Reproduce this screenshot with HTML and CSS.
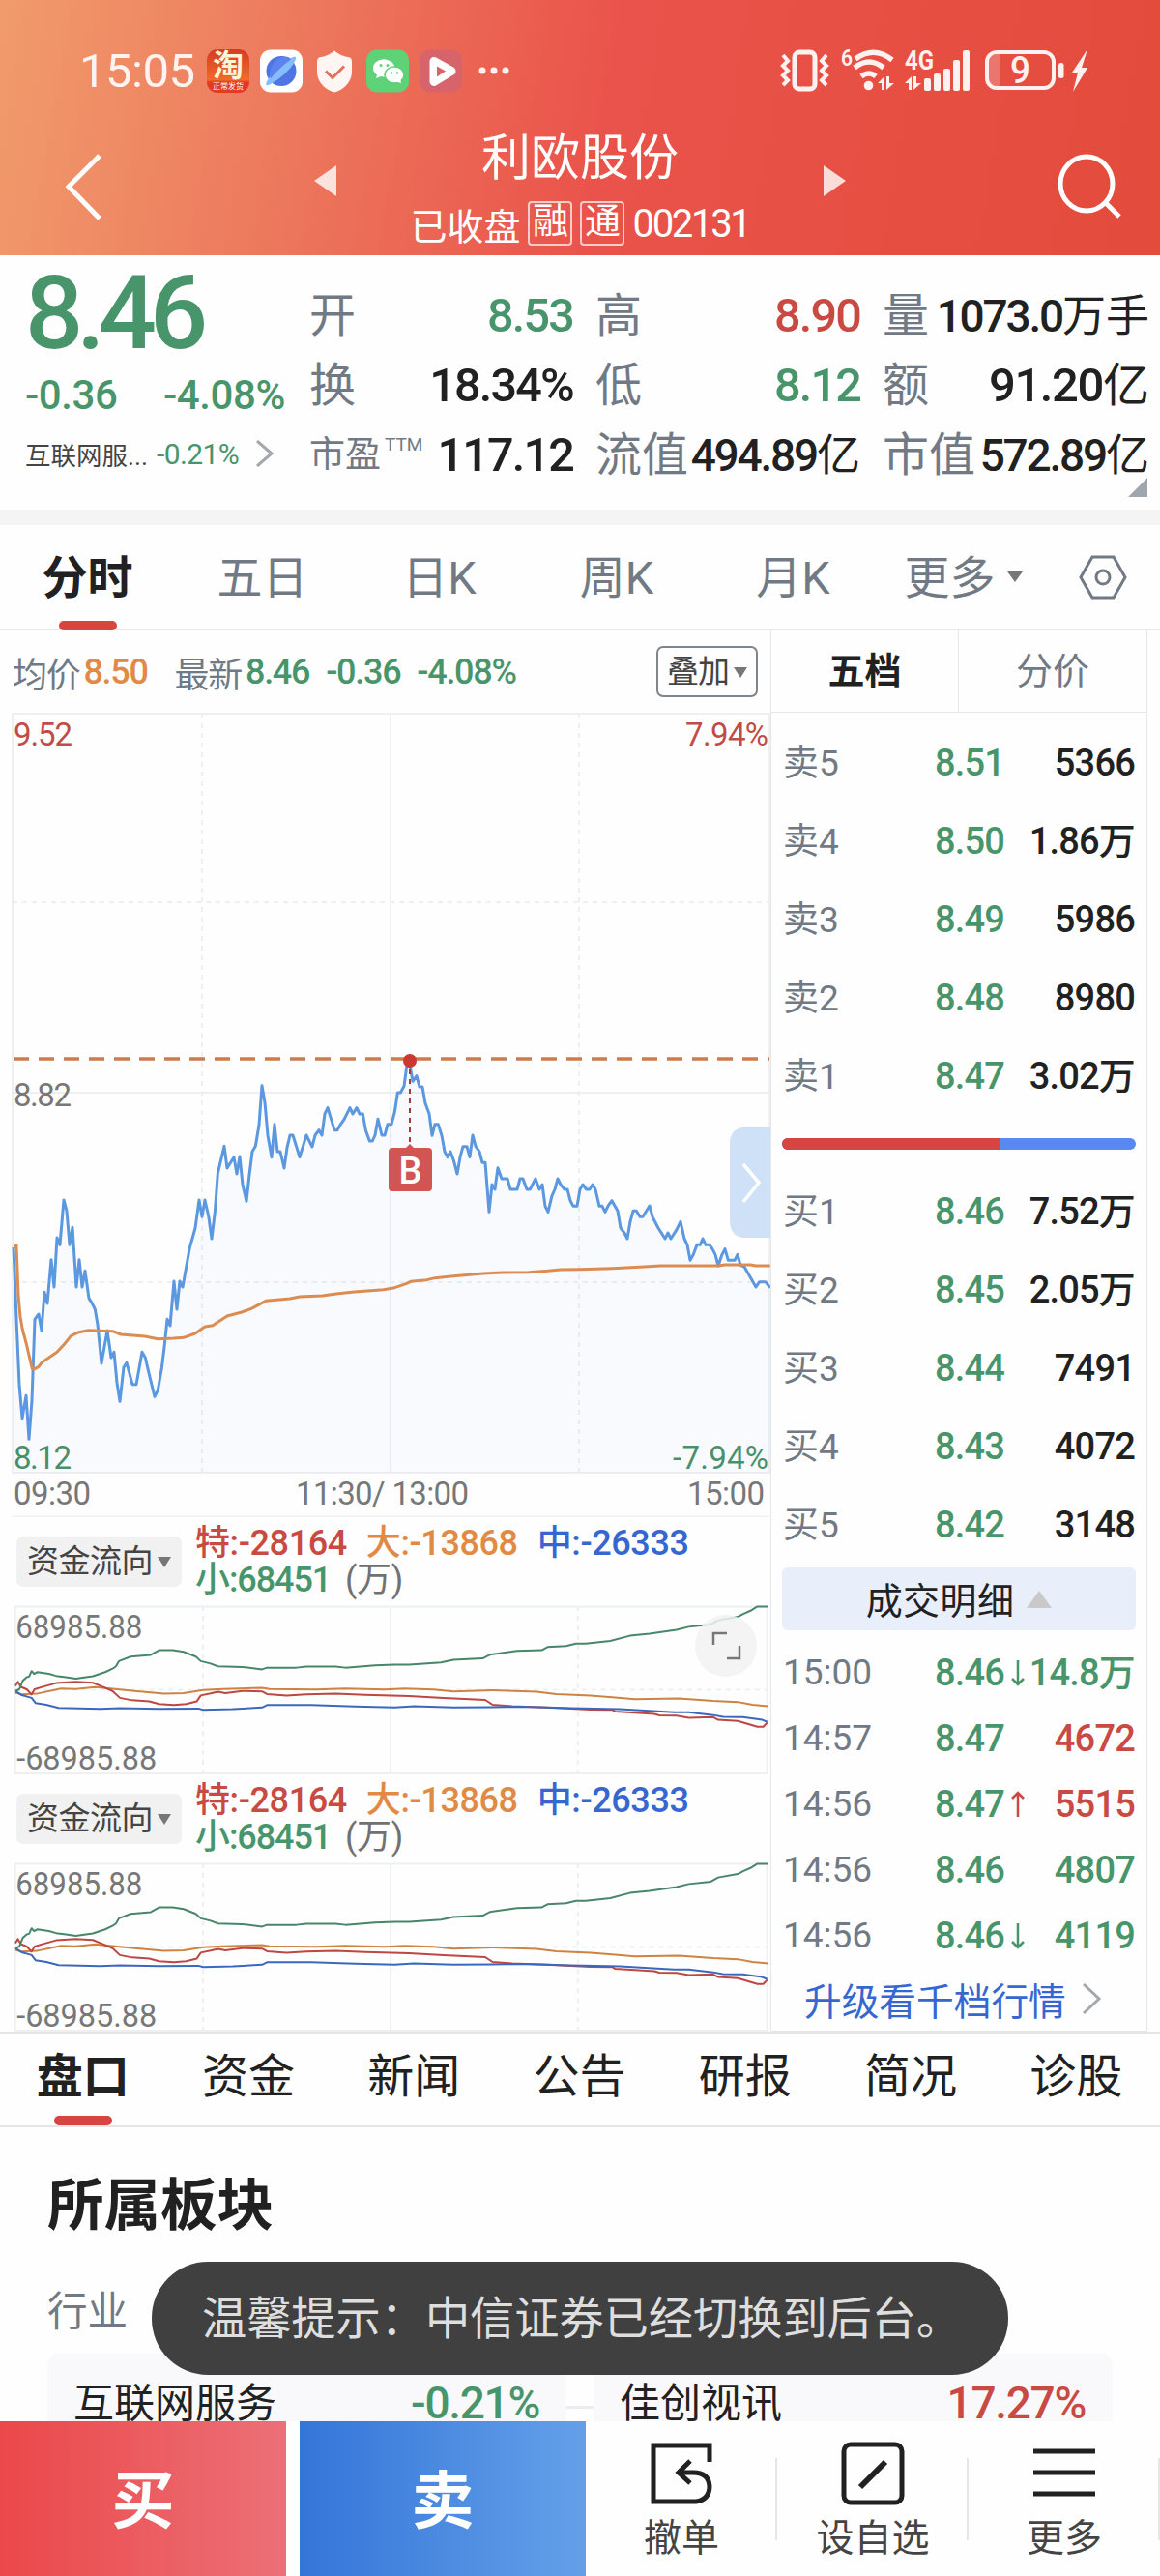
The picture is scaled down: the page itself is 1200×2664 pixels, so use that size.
FILE: index.html
```html
<!DOCTYPE html>
<html lang="zh-CN">
<head>
  <meta charset="UTF-8" />
  <meta name="viewport" content="width=device-width, initial-scale=1.0"/>
  <title>利欧股份 002131</title>
  <link rel="stylesheet" href="styles.css">
</head>
<body>
  <!-- Header -->
  <header class="header">
    <div class="status-bar">
      <span class="clock">15:05</span>
      <div class="app-icons">
        <div class="app taobao"><b>淘</b><i>正常发货</i></div>
        <svg class="app" viewBox="0 0 44 44">
          <rect width="44" height="44" rx="11" fill="#fff"/>
          <circle cx="22" cy="22" r="15.5" fill="#4f74e3"/>
          <path d="M10 36C2 40 8 28 19 18S41 3 36 12C32 20 20 31 10 36Z" fill="#86bdfb"/>
          <path d="M11 30C8 20 15 8 25 7C29 7 31 8 32 10C26 14 17 22 11 30Z" fill="#5d83ee"/>
        </svg>
        <svg class="app" viewBox="0 0 44 44">
          <path d="M22 1C28 6 33 7 38 8Q40 9 40 12V23C40 34 30 42 22 44C14 42 4 34 4 23V12Q4 9 6 8C11 7 16 6 22 1Z" fill="#fff6f4"/>
          <path d="M13 22L20 29L32 17" fill="none" stroke="#e2705c" stroke-width="3"/>
        </svg>
        <svg class="app" viewBox="0 0 44 44">
          <rect width="44" height="44" rx="11" fill="#5fd278"/>
          <path d="M18 10C11 10 7 14.500 7 19C7 22 9 24.500 11 26L10 29.500L15 27.500L20 28V10Z" fill="#fff"/>
          <ellipse cx="18.500" cy="19" rx="11" ry="9" fill="#fff"/>
          <ellipse cx="29" cy="26" rx="10" ry="8.500" fill="#fff" stroke="#5fd278" stroke-width="1.500"/>
          <path d="M31 33L36 34.500L35 30Z" fill="#fff"/>
          <circle cx="15" cy="16" r="1.500" fill="#5fd278"/><circle cx="22" cy="16" r="1.500" fill="#5fd278"/>
          <circle cx="26" cy="24" r="1.200" fill="#5fd278"/><circle cx="32" cy="24" r="1.200" fill="#5fd278"/>
        </svg>
        <svg class="app" viewBox="0 0 44 44">
          <rect width="44" height="44" rx="11" fill="#d7646b"/>
          <path d="M15 12L33 22L15 33Z" fill="#fbd9d7" stroke="#fff" stroke-width="9" stroke-linejoin="round"/>
          <path d="M18 17L27 22L18 28Z" fill="#d7646b"/>
        </svg>
        <svg class="dots" viewBox="0 0 34 44"><circle cx="4" cy="22" r="3.500"/><circle cx="16" cy="22" r="3.500"/><circle cx="28" cy="22" r="3.500"/></svg>
      </div>
      <svg class="system-icons" viewBox="805 48 325 52">
        <g fill="none" stroke="#fff1ef" stroke-width="4">
          <rect x="822" y="55" width="21" height="38" rx="5" stroke-width="5"/>
          <path d="M810 58L815 64L810 69L815 74L810 79L815 84L810 89M855 58L850 64L855 69L850 74L855 79L850 84L855 89"/>
          <path d="M885 62Q904 48 923 63M884 71Q899 59 914 71M891 80Q899 74 906 80" stroke-width="5.500"/>
          <rect x="1021" y="55" width="69" height="37" rx="10"/>
        </g>
        <g fill="#fff1ef">
          <circle cx="898.500" cy="89.500" r="4.800"/>
          <path d="M908 87L915 80V94H912V87ZM917 80H920V87H925L917 94Z"/>
          <path d="M936 87L943 80V94H940V87ZM945 80H948V87H953L945 94Z"/>
          <rect x="956" y="82" width="7" height="13" rx="2"/>
          <rect x="966" y="77" width="7" height="18" rx="2"/>
          <rect x="976" y="72" width="7" height="23" rx="2"/>
          <rect x="986" y="63" width="7" height="32" rx="2"/>
          <rect x="996" y="53" width="7" height="42" rx="2"/>
          <path d="M1023 64Q1024 57 1031 57H1034V90H1031Q1024 90 1023 83Z" opacity=".25"/>
          <rect x="1095" y="66" width="5.500" height="16" rx="2.500"/>
          <path d="M1125 52L1109 76H1115L1110 96L1125 71H1119Z"/>
          <text x="870" y="69" font-size="24" font-weight="600" textLength="12" lengthAdjust="spacingAndGlyphs">6</text>
          <text x="936" y="73" font-size="27" font-weight="700" textLength="30" lengthAdjust="spacingAndGlyphs">4G</text>
          <text x="1045" y="87" font-size="38" font-weight="500" textLength="21" lengthAdjust="spacingAndGlyphs">9</text>
        </g>
      </svg>
    </div>
    <div class="nav-bar">
      <svg class="back" viewBox="0 0 42 72"><path d="M38 4L6 36L38 69" fill="none" stroke="#fff" stroke-width="5"/></svg>
      <svg class="arrow" viewBox="0 0 23 32"><path d="M23 0V32L0 16Z"/></svg>
      <div class="title-box">
        <h1>利欧股份</h1>
        <div class="subtitle">
          <span>已收盘</span>
          <span class="badge">融</span>
          <span class="badge">通</span>
          <span class="code">002131</span>
        </div>
      </div>
      <svg class="arrow" viewBox="0 0 23 32"><path d="M0 0V32L23 16Z"/></svg>
      <svg class="search" viewBox="0 0 70 70"><ellipse cx="32" cy="33" rx="27" ry="28"/><path d="M52 53L66 67"/></svg>
    </div>
  </header>

  <!-- Quote -->
  <section class="quote">
    <div class="quote-main">
      <div class="price down">8.46</div>
      <div class="change down"><span>-0.36</span><span>-4.08%</span></div>
      <div class="industry">
        <span>互联网服...</span><span class="down pct">-0.21%</span>
        <svg class="chevron" viewBox="0 0 20 28"><path d="M2 1L17 14L2 27"/></svg>
      </div>
    </div>
    <dl class="quote-grid">
      <div><dt>开</dt><dd class="down">8.53</dd></div>
      <div><dt>高</dt><dd class="up">8.90</dd></div>
      <div><dt>量</dt><dd class="unit">1073.0<b>万手</b></dd></div>
      <div><dt>换</dt><dd>18.34%</dd></div>
      <div><dt>低</dt><dd class="down">8.12</dd></div>
      <div><dt>额</dt><dd class="unit large">91.20<b>亿</b></dd></div>
      <div><dt class="small">市盈<sup>TTM</sup></dt><dd>117.12</dd></div>
      <div><dt>流值</dt><dd class="unit">494.89<b>亿</b></dd></div>
      <div><dt>市值</dt><dd class="unit">572.89<b>亿</b></dd></div>
    </dl>
    <span class="corner"></span>
  </section>

  <!-- Period tabs -->
  <nav class="period-tabs">
    <a class="active">分时</a>
    <a>五日</a>
    <a>日K</a>
    <a>周K</a>
    <a>月K</a>
    <a>更多<i class="caret"></i></a>
    <svg class="gear" viewBox="0 0 52 48"><path d="M15 3H37L49 24L37 45H15L3 24Z"/><circle cx="26" cy="24" r="7"/></svg>
  </nav>

  <main class="board">
    <div class="charts">
      <div class="stat-row">
        <span>均价</span><b class="orange">8.50</b>
        <span class="latest">最新</span><b class="down">8.46</b><b class="down diff">-0.36</b><b class="down rate">-4.08%</b>
        <button class="overlay-btn">叠加<i class="caret"></i></button>
      </div>

      <!-- Intraday chart -->
      <svg class="chart-main" viewBox="0 737 797 832">
        <g class="grid">
          <path d="M13 738H796V1523H13ZM404 738V1523M13 1130H796M13 1568.500H796"/>
          <path class="dash" d="M209 738V1523M599 738V1523M13 933H796M13 1326H796"/>
        </g>
        <g transform="translate(0 1060) scale(.33333)" fill="none" stroke-linejoin="round">
          <polygon class="area" points="42,1388 42,690 51,910 60,1115 69,1220 81,1150 90,1285 99,1165 108,913 120,897 129,948 138,829 147,864 159,728 168,813 177,660 186,682 198,543 207,577 216,682 225,628 237,813 246,728 255,813 264,763 276,848 295,882 315,1050 333,948 354,1015 372,1168 393,1048 411,1115 423,1115 441,1015 480,1153 502,1065 519,913 528,933 540,795 549,882 558,795 567,813 588,695 618,543 627,595 636,543 657,663 676,460 696,376 705,444 726,410 735,462 744,408 765,547 783,393 804,310 813,188 843,410 852,308 882,444 900,342 930,410 951,342 969,378 1017,257 1038,326 1086,257 1126,276 1147,360 1173,292 1185,342 1215,308 1234,210 1254,190 1271,120 1311,192 1341,343 1360,308 1389,410 1419,462 1437,377 1467,342 1506,427 1518,580 1527,495 1545,443 1605,510 1623,477 1662,477 1701,580 1731,477 1791,562 1809,495 1839,495 1878,580 1899,545 1947,663 1975,577 2016,561 2064,663 2112,610 2142,730 2181,663 2229,747 2250,695 2289,712 2346,813 2390,815 2390,1388"/>
          <polyline class="line-price" points="42,690 51,910 60,1115 69,1220 81,1150 90,1285 99,1165 108,913 120,897 129,948 138,829 147,864 159,728 168,813 177,660 186,682 198,543 207,577 216,682 225,628 237,813 246,728 255,813 264,763 276,848 285,862 295,882 303,930 315,1050 333,948 345,1032 354,1015 363,1110 372,1168 384,1062 393,1048 411,1115 423,1115 441,1015 451,1032 462,1080 480,1153 490,1133 502,1065 510,1000 519,913 528,933 540,795 549,882 558,795 567,813 588,695 606,630 618,543 627,595 636,543 648,597 657,663 667,580 676,460 696,376 705,444 726,410 735,462 744,408 753,495 765,547 774,465 783,393 793,376 804,310 813,188 822,240 831,342 843,410 852,308 861,393 870,393 882,444 891,380 900,342 909,342 930,410 951,342 969,378 978,342 990,326 999,342 1008,276 1017,257 1038,326 1047,326 1056,310 1068,293 1086,257 1095,276 1107,257 1116,276 1126,276 1135,326 1147,360 1156,360 1164,342 1173,292 1185,342 1194,342 1203,308 1215,308 1225,270 1234,210 1243,210 1254,190 1262,130 1271,120 1281,175 1293,158 1302,192 1311,192 1320,243 1332,275 1341,343 1350,308 1360,308 1371,343 1380,393 1389,410 1398,393 1408,420 1419,462 1428,410 1437,377 1449,377 1458,410 1467,342 1476,376 1488,393 1497,427 1506,427 1518,580 1527,495 1536,510 1545,443 1557,477 1575,477 1584,510 1605,510 1614,477 1623,477 1635,510 1645,510 1662,477 1674,510 1683,495 1692,562 1701,580 1713,530 1722,510 1731,477 1740,495 1752,510 1761,510 1770,545 1779,562 1791,562 1800,510 1809,495 1820,510 1830,510 1839,495 1848,510 1860,562 1869,562 1878,580 1888,560 1899,545 1917,577 1926,630 1938,645 1947,663 1956,610 1965,577 1975,577 1986,595 1995,595 2016,561 2025,595 2043,630 2064,663 2073,645 2082,663 2100,635 2112,610 2124,663 2133,682 2142,730 2152,712 2163,682 2173,682 2181,663 2190,682 2202,682 2211,695 2220,712 2229,747 2241,712 2250,695 2260,730 2280,730 2289,712 2298,745 2310,750 2337,797 2346,813 2357,797 2376,797 2390,815"/>
          <polyline class="line-avg" points="44,690 51,683 57,840 63,905 70,945 82,990 90,1025 100,1067 108,1067 120,1060 130,1047 177,1015 200,990 220,965 245,953 275,947 350,950 375,960 450,966 490,974 540,972 570,970 606,957 636,936 660,932 705,903 750,891 780,880 825,856 900,849 930,843 1000,840 1050,833 1100,828 1190,821 1225,815 1260,803 1275,796 1325,791 1350,785 1400,780 1500,771 1560,768 1640,767 1700,763 1740,759 1800,758 1900,755 2000,750 2050,747 2230,747 2250,744 2330,744 2345,747 2390,747"/>
        </g>
        <path class="limit-line" d="M14 1095H796"/>
        <path d="M424 1106V1184" stroke="#a53a3a" stroke-width="2" stroke-dasharray="5 5"/>
        <circle cx="424" cy="1097" r="7" fill="#cb3830"/>
        <path d="M419 1188L424 1183L429 1188Z" fill="#d35553"/>
        <rect x="402" y="1187" width="45" height="45" rx="4" fill="#d35553"/>
        <text x="424.500" y="1224" font-size="38" font-weight="500" fill="#fff" text-anchor="middle">B</text>
        <path d="M797 1166H768Q755 1168 755 1182V1264Q756 1278 768 1280H797Z" fill="#cfe1f6"/>
        <path d="M769 1204L785 1223L769 1243" fill="none" stroke="#fff" stroke-width="3.500"/>
        <g class="axis">
          <text x="14" y="771" fill="#c14b46" textLength="61">9.52</text>
          <text x="709" y="771" fill="#c14b46" textLength="86">7.94%</text>
          <text x="14" y="1144" textLength="60">8.82</text>
          <text x="14" y="1519" fill="#48906a" textLength="60">8.12</text>
          <text x="696" y="1519" fill="#48906a" textLength="99">-7.94%</text>
          <text x="14" y="1556" textLength="80">09:30</text>
          <text x="306" y="1556" textLength="179">11:30/ 13:00</text>
          <text x="711" y="1556" textLength="80">15:00</text>
        </g>
      </svg>

      <!-- Fund flow 1 -->
      <div class="flow-head">
        <button class="flow-btn">资金流向<i class="caret"></i></button>
        <p><b class="up">特:-28164</b><b class="orange">大:-13868</b><b class="blue">中:-26333</b><br><b class="down small">小:68451</b><span>(万)</span></p>
      </div>
      <div class="flow-wrap">
        <svg class="flow-chart" viewBox="0 1660 797 176">
          <defs>
            <g id="flow">
              <g class="grid">
                <path d="M13.500 1661.500H796V1835H13.500ZM404 1661V1835"/>
                <path class="dash" d="M209 1661V1835M599 1661V1835M13 1748H796"/>
              </g>
              <g class="flow-lines" transform="translate(0 1560) scale(.5102 .35714)">
                <polyline stroke="#cf8342" points="27,535 40,540 70,538 120,523 150,524 190,519 230,524 270,530 330,538 370,536 410,527 450,524 530,521 545,524 640,526 700,523 780,526 820,523 880,526 920,531 1000,528 1090,532 1130,539 1200,543 1250,549 1290,554 1380,552 1450,559 1500,562 1530,570 1562,574"/>
                <polyline stroke="#bd4742" points="27,515 32,503 38,518 50,525 60,540 66,525 85,517 110,507 150,503 185,506 200,515 225,530 240,550 265,557 300,560 320,568 350,571 375,568 397,560 405,543 425,537 440,532 455,536 490,530 530,531 540,539 580,543 620,540 680,538 740,541 830,545 900,550 985,556 1000,570 1040,574 1110,578 1200,584 1245,585 1250,590 1330,597 1340,601 1375,602 1400,608 1450,606 1460,614 1500,617 1540,634 1552,634 1560,622"/>
                <polyline stroke="#3b68bd" points="27,530 40,542 60,550 68,565 90,570 115,579 200,582 240,580 320,582 400,581 410,585 470,583 530,578 540,571 630,571 720,575 800,578 840,574 920,578 1060,576 1160,580 1260,583 1370,592 1400,592 1450,600 1470,605 1510,606 1550,614 1560,620"/>
                <polyline stroke="#48866a" points="27,530 35,525 42,500 50,490 55,488 60,472 65,480 72,475 95,480 110,486 130,490 150,494 185,487 210,475 225,465 232,458 238,443 262,430 303,425 320,411 348,411 370,416 395,430 405,443 425,450 440,458 490,460 530,467 540,462 600,462 620,459 680,459 700,462 760,455 800,453 830,453 895,447 920,439 980,435 995,424 1050,413 1100,411 1112,402 1150,399 1170,392 1190,392 1240,384 1280,369 1320,363 1375,352 1400,343 1445,336 1460,324 1500,314 1512,305 1525,297 1540,284 1562,284"/>
              </g>
              <g class="axis">
                <text x="14" y="1694" textLength="132" lengthAdjust="spacingAndGlyphs">68985.88</text>
                <text x="15" y="1831" textLength="146" lengthAdjust="spacingAndGlyphs">-68985.88</text>
              </g>
            </g>
          </defs>
          <use href="#flow"/>
        </svg>
        <svg class="expand" viewBox="0 0 64 64"><circle cx="32" cy="32" r="32" fill="#f2f2f2" opacity=".85"/><path d="M19 31V19H33M33 45H46V32" fill="none" stroke="#777" stroke-width="2.500"/></svg>
      </div>

      <!-- Fund flow 2 -->
      <div class="flow-head">
        <button class="flow-btn">资金流向<i class="caret"></i></button>
        <p><b class="up">特:-28164</b><b class="orange">大:-13868</b><b class="blue">中:-26333</b><br><b class="down small">小:68451</b><span>(万)</span></p>
      </div>
      <svg class="flow-chart" viewBox="0 1660 797 176"><use href="#flow"/></svg>
    </div>

    <!-- Order book -->
    <aside class="book">
      <div class="book-tabs"><a class="active">五档</a><a>分价</a></div>
      <ul class="levels">
        <li><span>卖5</span><b class="down">8.51</b><b>5366</b></li>
        <li><span>卖4</span><b class="down">8.50</b><b>1.86万</b></li>
        <li><span>卖3</span><b class="down">8.49</b><b>5986</b></li>
        <li><span>卖2</span><b class="down">8.48</b><b>8980</b></li>
        <li><span>卖1</span><b class="down">8.47</b><b>3.02万</b></li>
      </ul>
      <div class="ratio"><i></i></div>
      <ul class="levels">
        <li><span>买1</span><b class="down">8.46</b><b>7.52万</b></li>
        <li><span>买2</span><b class="down">8.45</b><b>2.05万</b></li>
        <li><span>买3</span><b class="down">8.44</b><b>7491</b></li>
        <li><span>买4</span><b class="down">8.43</b><b>4072</b></li>
        <li><span>买5</span><b class="down">8.42</b><b>3148</b></li>
      </ul>
      <button class="detail-btn">成交明细<i></i></button>
      <ul class="levels trades">
        <li><span>15:00</span><b class="down">8.46<svg viewBox="0 0 14 28"><path d="M7 1V26M1 20L7 26L13 20"/></svg></b><b class="down">14.8万</b></li>
        <li><span>14:57</span><b class="down">8.47</b><b class="up">4672</b></li>
        <li><span>14:56</span><b class="down">8.47<svg class="up" viewBox="0 0 14 28"><path d="M7 27V2M1 8L7 2L13 8"/></svg></b><b class="up">5515</b></li>
        <li><span>14:56</span><b class="down">8.46</b><b class="down">4807</b></li>
        <li><span>14:56</span><b class="down">8.46<svg viewBox="0 0 14 28"><path d="M7 1V26M1 20L7 26L13 20"/></svg></b><b class="down">4119</b></li>
      </ul>
      <a class="upgrade">升级看千档行情<svg class="chevron" viewBox="0 0 22 34"><path d="M2 2L18 17L2 32"/></svg></a>
    </aside>
  </main>

  <!-- Info tabs -->
  <nav class="info-tabs">
    <a class="active">盘口</a><a>资金</a><a>新闻</a><a>公告</a><a>研报</a><a>简况</a><a>诊股</a>
  </nav>

  <section class="sector">
    <h2>所属板块</h2>
    <h3>行业</h3>
    <div class="cards">
      <div class="card"><span>互联网服务</span><b class="down">-0.21%</b></div>
      <i class="link"></i>
      <div class="card"><span>佳创视讯</span><b class="up">17.27%</b></div>
    </div>
  </section>

  <div class="toast">温馨提示：中信证券已经切换到后台。</div>

  <!-- Bottom bar -->
  <footer class="bottom-bar">
    <button class="buy">买</button>
    <button class="sell">卖</button>
    <div class="tool">
      <svg viewBox="0 0 66 66"><path d="M62 21V4H4V62H48Q62 60 62 46Q61 32 45 32H31M42 20L30 32L42 43"/></svg>
      <span>撤单</span>
    </div>
    <div class="tool">
      <svg viewBox="0 0 66 66"><rect x="3" y="3" width="60" height="60" rx="7"/><path d="M20 47L46 21" stroke-width="6"/></svg>
      <span>设自选</span>
    </div>
    <div class="tool">
      <svg viewBox="0 0 66 66"><path d="M1 10H65M1 32H65M1 54H65"/></svg>
      <span>更多</span>
    </div>
  </footer>
</body>
</html>
```

FILE: styles.css
```css
* {
  margin: 0;
  padding: 0;
  box-sizing: border-box;
}
body {
  position: relative;
  width: 1200px;
  height: 2664px;
  overflow: hidden;
  background: #fefefe;
  color: #212121;
  font-family: Roboto, 'Noto Sans CJK SC', sans-serif;
}
svg {
  display: block;
  flex-shrink: 0;
}
button {
  border: none;
  background: none;
  font-family: inherit;
  color: inherit;
}
b {
  font-weight: 500;
}
i {
  font-style: normal;
}
ul {
  list-style: none;
}
.up {
  color: #c94a43;
}
.down {
  color: #48956b;
}
.orange {
  color: #e08a45;
}
.blue {
  color: #3667d1;
}
.caret {
  display: inline-block;
  border: 7px solid transparent;
  border-top: 11px solid #777;
  border-bottom: none;
}
.chevron {
  fill: none;
  stroke: #a3a8ae;
  stroke-width: 3;
}

/* header */
.header {
  height: 264px;
  background: linear-gradient(100deg, #f19b6c 0%, #ec755b 28%, #ea534b 52%, #e64f42 75%, #e34b3c 100%);
  color: #fff;
}
.status-bar {
  display: flex;
  align-items: center;
  height: 100px;
  padding: 46px 70px 0 82px;
}
.clock {
  width: 132px;
  font-size: 49px;
  letter-spacing: -0.5px;
  color: #fff3ef;
}
.app-icons {
  display: flex;
  gap: 11px;
  flex: 1;
}
.app {
  width: 44px;
  height: 45px;
}
.taobao {
  display: flex;
  flex-direction: column;
  align-items: center;
  border-radius: 11px;
  background: linear-gradient(#d53b24, #ef6a2b 70%, #e23b22 76%);
  overflow: hidden;
}
.taobao b {
  font-size: 32px;
  line-height: 34px;
  font-weight: 700;
  color: #fff3d8;
}
.taobao i {
  font-size: 8px;
  line-height: 10px;
}
.dots {
  width: 34px;
  height: 44px;
  margin-left: 6px;
  fill: #fff1ef;
}
.system-icons {
  width: 325px;
  height: 52px;
}
.nav-bar {
  display: flex;
  height: 164px;
  padding: 0 38px 0 65px;
}
.back {
  width: 42px;
  height: 72px;
  margin: 59px 218px 0 0;
  margin-top: 57px;
}
.arrow {
  width: 23px;
  height: 32px;
  margin-top: 71px;
  fill: #fff;
  opacity: 0.8;
}
.title-box {
  flex: 1;
  text-align: center;
  padding-top: 32px;
}
.title-box h1 {
  font-size: 51px;
  line-height: 64px;
  font-weight: 400;
}
.subtitle {
  display: flex;
  align-items: center;
  justify-content: center;
  height: 70px;
  gap: 8px;
  font-size: 38px;
}
.badge {
  width: 46px;
  height: 46px;
  border: 2px solid rgba(255, 255, 255, 0.7);
  border-radius: 4px;
  line-height: 40px;
  font-size: 37px;
}
.code {
  font-size: 40px;
  letter-spacing: -2.3px;
}
.search {
  width: 70px;
  height: 70px;
  margin: 57px 0 0 217px;
  fill: none;
  stroke: #fff;
  stroke-width: 5;
}

/* quote */
.quote {
  position: relative;
  display: flex;
  height: 279px;
  padding: 0 10px 0 26px;
  border-bottom: 16px solid #f4f4f4;
}
.quote-main {
  width: 294px;
}
.price {
  height: 118px;
  line-height: 121px;
  font-size: 106px;
  font-weight: 500;
  letter-spacing: -7px;
}
.change {
  display: flex;
  justify-content: space-between;
  width: 269px;
  height: 54px;
  line-height: 54px;
  font-size: 42px;
  font-weight: 500;
  letter-spacing: -0.4px;
}
.industry {
  display: flex;
  align-items: center;
  height: 66px;
  font-size: 26.500px;
  color: #444;
}
.industry .pct {
  margin: 0 17px 0 9px;
  font-size: 30px;
  letter-spacing: -0.6px;
}
.industry .chevron {
  width: 20px;
  height: 28px;
}
.quote-grid {
  display: grid;
  grid-template-columns: 273px 274px 276px;
  grid-template-rows: repeat(3, 72px);
  column-gap: 23px;
  padding-top: 27px;
}
.quote-grid div {
  display: flex;
  justify-content: space-between;
  align-items: center;
  white-space: nowrap;
}
dt {
  font-size: 48px;
  line-height: 72px;
  color: #717a84;
}
dt.small {
  display: flex;
  font-size: 37px;
}
dt sup {
  margin: -11px 0 0 4px;
  font-size: 19px;
}
dd {
  font-size: 48.5px;
  line-height: 72px;
  font-weight: 500;
  letter-spacing: -1.8px;
}
dd.unit {
  font-size: 46px;
  letter-spacing: -2.2px;
}
dd.unit b {
  font-size: 45px;
  font-weight: 400;
  letter-spacing: 0;
}
dd.large {
  font-size: 49px;
  letter-spacing: -1.4px;
}
dd.large b {
  font-size: 48px;
}
.corner {
  position: absolute;
  right: 13px;
  bottom: 13px;
  border-left: 20px solid transparent;
  border-bottom: 20px solid #9fa6ae;
}

/* period tabs */
.period-tabs {
  display: grid;
  grid-template-columns: 181px 181px 185px 182px 183px 169px 119px;
  height: 109px;
  border-bottom: 2px solid #e8e8e8;
}
.period-tabs a {
  position: relative;
  text-align: center;
  line-height: 109px;
  font-size: 47px;
  color: #717a84;
  white-space: nowrap;
}
.period-tabs .active,
.info-tabs .active {
  font-weight: 700;
  color: #212121;
}
.period-tabs .active::after,
.info-tabs .active::after {
  content: '';
  position: absolute;
  left: calc(50% - 30px);
  bottom: 0;
  width: 60px;
  height: 10px;
  border-radius: 5px;
  background: #d64540;
}
.period-tabs .caret {
  margin: 0 0 12px 12px;
  border-width: 11px 8px 0;
}
.gear {
  width: 52px;
  height: 48px;
  margin: 30px 0 0 34px;
  fill: none;
  stroke: #717a84;
  stroke-width: 3;
}

/* board */
.board {
  display: flex;
  height: 1452px;
  border-bottom: 3px solid #e5e5e5;
}
.charts {
  width: 797px;
}
.stat-row {
  display: flex;
  align-items: center;
  height: 85px;
  padding: 0 13px;
  font-size: 36px;
  letter-spacing: -1.3px;
  color: #717a84;
}
.stat-row b {
  margin-left: 4px;
}
.stat-row .latest {
  margin-left: 28px;
}
.stat-row .diff,
.stat-row .rate {
  margin-left: 17px;
}
.overlay-btn {
  width: 105px;
  height: 53px;
  margin-left: auto;
  border: 2px solid #7d858d;
  border-radius: 7px;
  font-size: 33px;
  letter-spacing: -1px;
  line-height: 47px;
  color: #444;
  white-space: nowrap;
}
.overlay-btn .caret,
.flow-btn .caret {
  margin: 0 0 5px 5px;
}
.chart-main {
  width: 797px;
  height: 832px;
}
.grid {
  fill: none;
  stroke: #eeeff1;
  stroke-width: 2;
}
.dash {
  stroke-dasharray: 5 5;
}
.area {
  fill: #5b98e6;
  fill-opacity: 0.035;
}
.line-price {
  stroke: #5b98e0;
  stroke-width: 9;
}
.line-avg {
  stroke: #db8c52;
  stroke-width: 9;
}
.limit-line {
  stroke: #c97d4e;
  stroke-width: 3.5;
  stroke-dasharray: 16 10;
}
.axis {
  font-size: 33px;
  fill: #777;
}
.flow-head {
  display: flex;
  align-items: center;
  height: 91px;
  padding: 1px 0 0 17px;
}
.flow-btn {
  width: 171px;
  height: 52px;
  margin-right: 14px;
  border-radius: 7px;
  background: #f1f1f1;
  font-size: 33px;
  letter-spacing: -0.5px;
  line-height: 50px;
  color: #444;
  white-space: nowrap;
}
.flow-head p {
  font-size: 36px;
  line-height: 38px;
  letter-spacing: -0.4px;
  color: #717171;
  white-space: nowrap;
}
.flow-head b {
  margin-right: 20px;
}
.flow-head .small {
  margin-right: 15px;
  letter-spacing: -1.1px;
}
.flow-wrap {
  position: relative;
}
.flow-chart {
  width: 797px;
  height: 175px;
}
.flow-lines {
  fill: none;
  stroke-linejoin: round;
}
.flow-lines polyline {
  stroke-width: 2;
  vector-effect: non-scaling-stroke;
}
.expand {
  position: absolute;
  top: 10px;
  left: 719px;
  width: 64px;
  height: 64px;
}

/* order book */
.book {
  width: 390px;
  border: 1px solid #e5e6e8;
  border-top: none;
}
.book-tabs {
  display: grid;
  grid-template-columns: 1fr 1fr;
  height: 85px;
  border-bottom: 1px solid #e5e6e8;
}
.book-tabs a {
  text-align: center;
  line-height: 84px;
  font-size: 38px;
  color: #717a84;
}
.book-tabs .active {
  border-right: 1px solid #e5e6e8;
  font-weight: 700;
  color: #212121;
}
.levels {
  padding: 12px 12px 0;
}
.levels li {
  display: grid;
  grid-template-columns: 157px 80px 1fr;
  height: 81px;
  line-height: 81px;
  font-size: 38px;
  white-space: nowrap;
}
.levels span {
  font-size: 37px;
  color: #717a84;
}
.levels b {
  letter-spacing: -0.8px;
}
.levels b:last-child {
  text-align: right;
}
.ratio {
  height: 12px;
  margin: 23px 11px 24px;
  border-radius: 6px;
  background: #5889ee;
  overflow: hidden;
}
.ratio i {
  display: block;
  width: 225px;
  height: 12px;
  background: #d64540;
}
.ratio + .levels {
  padding-top: 0;
}
.detail-btn {
  display: flex;
  align-items: center;
  justify-content: center;
  width: 366px;
  height: 65px;
  margin: 3px 11px 0;
  padding-bottom: 3px;
  border-radius: 6px;
  background: #e8eefa;
  font-size: 38px;
  letter-spacing: 0.4px;
}
.detail-btn i {
  margin: 3px 0 0 13px;
  border: 13px solid transparent;
  border-bottom: 18px solid #c9c9c9;
  border-top: none;
}
.trades {
  padding-top: 10px;
}
.trades li {
  height: 68px;
  line-height: 68px;
}
.trades b {
  display: flex;
  align-items: center;
}
.trades b:last-child {
  justify-content: flex-end;
}
.trades svg {
  width: 14px;
  height: 28px;
  margin-left: 7px;
  fill: none;
  stroke: currentColor;
  stroke-width: 2.5;
}
.upgrade {
  display: flex;
  align-items: center;
  height: 62px;
  padding-left: 34px;
  font-size: 38.7px;
  color: #3667d1;
}
.upgrade .chevron {
  width: 22px;
  height: 34px;
  margin-left: 16px;
}

/* info tabs */
.info-tabs {
  display: flex;
  height: 96px;
  border-bottom: 2px solid #e5e5e5;
  padding-right: 1px;
}
.info-tabs a {
  position: relative;
  width: 171.4px;
  text-align: center;
  line-height: 87px;
  font-size: 48px;
}

/* sector */
.sector {
  padding: 36px 49px 0;
}
.sector h2 {
  font-size: 58.5px;
  line-height: 90px;
}
.sector h3 {
  margin-top: 35px;
  font-size: 41.5px;
  line-height: 60px;
  font-weight: 400;
  color: #717a84;
}
.cards {
  display: flex;
  margin-top: 13px;
}
.card {
  display: flex;
  justify-content: space-between;
  width: 537px;
  height: 120px;
  padding: 0 28px 0 27px;
  border-radius: 12px;
  background: #f9f9fc;
  font-size: 42px;
  line-height: 103px;
}
.card b {
  font-size: 46px;
  letter-spacing: -1.3px;
}
.link {
  width: 28px;
  height: 3px;
  margin-top: 54px;
  background: #ececee;
}
.toast {
  position: absolute;
  top: 2339px;
  left: 157px;
  width: 886px;
  height: 117px;
  padding-left: 52px;
  border-radius: 58px;
  background: #404040;
  color: #dedede;
  font-size: 46.2px;
  line-height: 118px;
  white-space: nowrap;
}

/* bottom bar */
.bottom-bar {
  position: absolute;
  left: 0;
  bottom: 0;
  display: flex;
  width: 1200px;
  height: 160px;
  background: #fefefe;
}
.buy,
.sell {
  width: 296px;
  margin-right: 14px;
  padding-bottom: 6px;
  font-size: 65px;
  font-weight: 700;
  color: #fff;
  background: linear-gradient(90deg, #eb484a, #ec7077);
}
.sell {
  margin-right: 0;
  background: linear-gradient(90deg, #3475d8, #64a0e9);
}
.tool {
  display: flex;
  flex-direction: column;
  align-items: center;
  width: 198px;
  padding-top: 21px;
  background: linear-gradient(#e5e6e8, #e5e6e8) right 38px / 2px 85px no-repeat;
}
.tool svg {
  width: 66px;
  height: 66px;
  fill: none;
  stroke: #212121;
  stroke-width: 5;
}
.tool span {
  font-size: 39px;
  line-height: 69px;
  color: #444;
}
```
